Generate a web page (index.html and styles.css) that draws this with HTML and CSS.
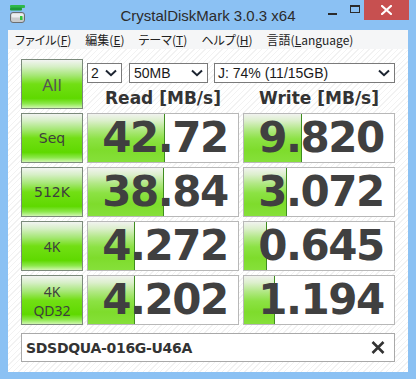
FILE: index.html
```html
<!DOCTYPE html>
<html lang="ja">
<head>
<meta charset="utf-8">
<title>CrystalDiskMark 3.0.3 x64</title>
<link rel="stylesheet" href="styles.css">
</head>
<body>
<div class="window">
  <div class="titlebar">
    <div class="tb-left">
      <svg class="app-icon" width="16" height="19" viewBox="0 0 16 19">
        <rect x="0" y="0" width="15" height="3" rx="1" fill="#2fb84a"/>
        <rect x="0" y="2.5" width="12" height="3" rx="1" fill="#1e9a38"/>
        <rect x="0.5" y="7.5" width="14" height="10" rx="2.5" fill="#c9cbcd" stroke="#6a6e72"/>
        <rect x="1.5" y="8.5" width="12" height="4" rx="1.5" fill="#eceeef"/>
        <rect x="10" y="11" width="2.5" height="4" fill="#2fc43a"/>
      </svg>
    </div>
    <div class="title">CrystalDiskMark 3.0.3 x64</div>
    <div class="tb-right">
      <div class="ctl min"><span class="min-bar"></span></div>
      <div class="ctl max"><span class="max-box"></span></div>
      <div class="ctl close">
        <svg width="11" height="10" viewBox="0 0 11 10"><path d="M1 1 L10 9 M10 1 L1 9" stroke="#fff" stroke-width="2.2" stroke-linecap="square"/></svg>
      </div>
    </div>
  </div>
  <div class="client">
    <div class="menubar">
      <span class="menu-item">ファイル(<u>F</u>)</span>
      <span class="menu-item">編集(<u>E</u>)</span>
      <span class="menu-item">テーマ(<u>T</u>)</span>
      <span class="menu-item">ヘルプ(<u>H</u>)</span>
      <span class="menu-item">言語(<u>L</u>anguage)</span>
    </div>
    <div class="main">
      <div class="grid">
        <div class="btn btn-all">All</div>
        <div class="top-area">
          <div class="selects">
            <div class="sel sel-count"><span>2</span><svg class="chev" width="12" height="8" viewBox="0 0 12 8"><path d="M1 1.5 L6 6.2 L11 1.5" fill="none" stroke="#1c2430" stroke-width="2"/></svg></div>
            <div class="sel sel-size"><span>50MB</span><svg class="chev" width="12" height="8" viewBox="0 0 12 8"><path d="M1 1.5 L6 6.2 L11 1.5" fill="none" stroke="#1c2430" stroke-width="2"/></svg></div>
            <div class="sel sel-drive"><span>J: 74% (11/15GB)</span><svg class="chev" width="12" height="8" viewBox="0 0 12 8"><path d="M1 1.5 L6 6.2 L11 1.5" fill="none" stroke="#1c2430" stroke-width="2"/></svg></div>
          </div>
          <div class="heads">
            <div class="head">Read [MB/s]</div>
            <div class="head">Write [MB/s]</div>
          </div>
        </div>

        <div class="btn btn-comic">Seq</div>
        <div class="cell"><div class="bar" style="width:77px"></div><span class="num">42.72</span></div>
        <div class="cell"><div class="bar" style="width:58px"></div><span class="num">9.820</span></div>

        <div class="btn btn-comic">512K</div>
        <div class="cell"><div class="bar" style="width:76px"></div><span class="num">38.84</span></div>
        <div class="cell"><div class="bar" style="width:43px"></div><span class="num">3.072</span></div>

        <div class="btn">4K</div>
        <div class="cell"><div class="bar" style="width:47px"></div><span class="num">4.272</span></div>
        <div class="cell"><div class="bar" style="width:23px"></div><span class="num">0.645</span></div>

        <div class="btn btn-two">4K<br>QD32</div>
        <div class="cell"><div class="bar" style="width:47px"></div><span class="num">4.202</span></div>
        <div class="cell"><div class="bar" style="width:31px"></div><span class="num">1.194</span></div>
      </div>
      <div class="drive-field">
        <span class="drive-name">SDSDQUA-016G-U46A</span>
        <svg class="x-icon" width="14" height="13" viewBox="0 0 14 13"><path d="M1.5 1 L12.5 12 M12.5 1 L1.5 12" stroke="#333" stroke-width="2.6"/></svg>
      </div>
    </div>
  </div>
</div>
</body>
</html>
```

FILE: styles.css
```css
* { box-sizing: border-box; }
html, body { margin: 0; padding: 0; }
body { width: 416px; height: 379px; overflow: hidden; background: #8bc1f3; }

.window {
  width: 416px;
  height: 379px;
  background: #8bc1f3;
  display: flex;
  flex-direction: column;
}

.titlebar {
  height: 30px;
  display: grid;
  grid-template-columns: 1fr auto 1fr;
  align-items: start;
}
.tb-left { padding: 5px 0 0 10px; }
.app-icon { display: block; }
.title {
  font-family: "Liberation Sans", Arial, sans-serif;
  font-size: 15px;
  color: #2b2b2b;
  line-height: 30px;
  padding-top: 1px;
}
.tb-right {
  display: flex;
  justify-content: flex-end;
  padding-right: 7px;
}
.ctl { height: 20px; display: flex; align-items: center; justify-content: center; }
.min { width: 26px; }
.min-bar { display: block; width: 9px; height: 2px; background: #2b2b2b; margin-top: 8px; }
.max { width: 19px; }
.max-box { display: block; width: 10px; height: 8px; border: 1px solid #2b2b2b; border-top-width: 2px; margin-top: -2px; }
.close { width: 45px; background: #c75050; }
.close svg { display: block; }

.client {
  margin: 0 8px 7px;
  flex: 1;
  display: flex;
  flex-direction: column;
}

.menubar {
  height: 19px;
  background: #f5f6f7;
  display: flex;
  align-items: center;
  gap: 14px;
  padding-left: 7px;
  font-family: "Noto Sans CJK JP", "Liberation Sans", sans-serif;
  font-feature-settings: "palt";
  font-size: 12px;
  color: #222;
  line-height: 19px;
}
.menu-item u { text-underline-offset: 1px; }

.main {
  flex: 1;
  padding: 10px 13px 10px;
  background-color: #ffffff;
  background-image: repeating-linear-gradient(-45deg, #ffffff 0px, #ffffff 3px, #f2f2f2 3px, #f2f2f2 4px);
  display: flex;
  flex-direction: column;
  gap: 8px;
}

.grid {
  display: grid;
  grid-template-columns: 62px 152px 152px;
  grid-auto-rows: 50px;
  column-gap: 4px;
  row-gap: 4px;
}

.btn {
  border: 1px solid #7b8a7b;
  background: linear-gradient(to bottom, #f2f4f2 0%, #d6efc6 14%, #a6e776 32%, #72df14 50%, #5fd900 80%, #8ce84c 91%, #d0f6b0 100%);
  display: flex;
  align-items: center;
  justify-content: center;
  text-align: center;
  font-family: "Noto Sans", "DejaVu Sans", sans-serif;
  font-size: 14px;
  color: #3e3e3e;
  line-height: 17px;
}
.btn-all { font-size: 17px; color: #555; }
.btn-comic { font-family: "DejaVu Sans", sans-serif; font-size: 14px; }
.btn-two { line-height: 19px; padding-top: 1px; }

.top-area {
  grid-column: 2 / 4;
  display: flex;
  flex-direction: column;
  padding-top: 4px;
}
.selects { display: flex; gap: 7px; height: 20px; }
.sel {
  border: 1px solid #7a7a7a;
  background: #fff;
  display: flex;
  align-items: center;
  justify-content: space-between;
  font-family: "Liberation Sans", Arial, sans-serif;
  font-size: 14px;
  color: #1a1a1a;
  padding: 0 4px 0 3px;
  height: 20px;
}
.sel-count { width: 35px; }
.sel-size { width: 79px; padding-left: 4px; }
.sel-drive { width: 181px; margin-left: -1px; }
.chev { display: block; }

.heads { flex: 1; display: flex; gap: 4px; }
.head {
  width: 152px;
  text-align: center;
  font-family: "DejaVu Sans", Verdana, sans-serif;
  font-weight: bold;
  font-size: 17px;
  color: #333;
  line-height: 26px;
  padding-top: 2px;
}

.cell {
  position: relative;
  border: 1px solid #b8b8b8;
  background: #fff;
  display: flex;
  align-items: center;
  justify-content: center;
  overflow: hidden;
}
.bar {
  position: absolute;
  left: 0;
  top: 0;
  bottom: 0;
  border-right: 1px solid #3f8d1f;
  background: linear-gradient(to bottom, #f1f3ef 0%, #dcefcc 14%, #b2e886 32%, #8ce244 52%, #7edc2c 75%, #86e03a 100%);
}
.num {
  position: relative;
  font-family: "DejaVu Sans", Verdana, sans-serif;
  font-weight: bold;
  font-size: 42px;
  letter-spacing: -1.5px;
  color: #404040;
  line-height: 48px;
  padding-left: 4px;
}

.drive-field {
  height: 29px;
  border: 1px solid #a9a9a9;
  background: #fff;
  display: flex;
  align-items: center;
  justify-content: space-between;
  padding: 0 9px 0 4px;
}
.drive-name {
  font-family: "DejaVu Sans", Verdana, sans-serif;
  font-weight: bold;
  font-size: 14px;
  letter-spacing: -0.3px;
  color: #333;
}
.x-icon { display: block; }
```
